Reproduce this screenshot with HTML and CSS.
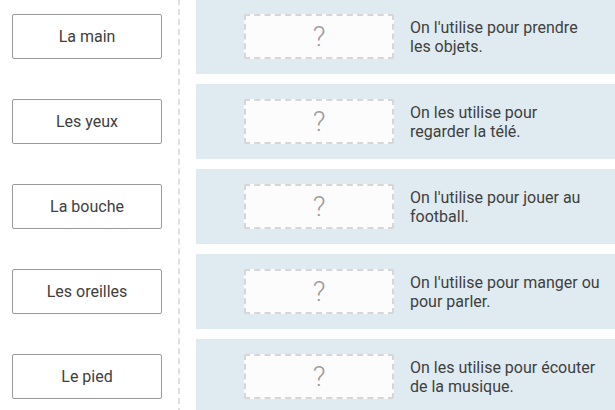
FILE: index.html
```html
<!DOCTYPE html>
<html lang="fr">
<head>
  <meta charset="UTF-8" />
  <title>Les parties du corps</title>
  <link rel="stylesheet" href="styles.css">
</head>
<body>

  <div class="board">
    <!-- MOTS A DEPLACER -->
    <div class="words">
      <div class="row"><div class="word">La main</div></div>
      <div class="row"><div class="word">Les yeux</div></div>
      <div class="row"><div class="word">La bouche</div></div>
      <div class="row"><div class="word">Les oreilles</div></div>
      <div class="row"><div class="word">Le pied</div></div>
    </div>

    <!-- ZONES DE DEPOT -->
    <div class="targets">
      <div class="panel">
        <div class="drop">?</div>
        <div class="hint">On l'utilise pour prendre les objets.</div>
      </div>
      <div class="panel">
        <div class="drop">?</div>
        <div class="hint">On les utilise pour regarder la télé.</div>
      </div>
      <div class="panel">
        <div class="drop">?</div>
        <div class="hint">On l'utilise pour jouer au football.</div>
      </div>
      <div class="panel">
        <div class="drop">?</div>
        <div class="hint">On l'utilise pour manger ou pour parler.</div>
      </div>
      <div class="panel">
        <div class="drop">?</div>
        <div class="hint">On les utilise pour écouter de la musique.</div>
      </div>
    </div>
  </div>

</body>
</html>
```

FILE: styles.css
```css
html, body {
  margin: 0;
  padding: 0;
  background-color: #ffffff;
  color: #333333;
  font-family: Roboto, 'Liberation Sans', sans-serif;
  font-size: 16px;
  height: 100%;
  overflow: hidden;
}

.board {
  display: flex;
  margin-top: -1px;   /* la premiere ligne est coupee en haut */
}

.words {
  display: flex;
  flex-direction: column;
  gap: 10px;
  width: 166px;
  padding-left: 12px;
  border-right: 2px dashed #e0e0e0;
  padding-bottom: 20px;
}

.row {
  height: 75px;
  display: flex;
  align-items: center;
}

.word {
  box-sizing: border-box;
  width: 150px;
  height: 45px;
  border: 1px solid #9a9a9a;
  border-radius: 2px;
  display: flex;
  align-items: center;
  justify-content: center;
  color: #404040;
}

.targets {
  flex: 1;
  display: flex;
  flex-direction: column;
  gap: 10px;
  margin-left: 16px;
}

.panel {
  height: 75px;
  background-color: #dfebf0;
  display: flex;
  align-items: center;
  padding-left: 48px;
}

.drop {
  box-sizing: border-box;
  width: 150px;
  height: 45px;
  border: 2px dashed #d6d6d6;
  border-radius: 2px;
  background-color: #fcfcfc;
  display: flex;
  align-items: center;
  justify-content: center;
  font-size: 28px;
  font-weight: 300;
  color: #9c9c9c;
}

.hint {
  width: 190px;
  margin-left: 16px;
  line-height: 19px;
  color: #404040;
}
```
